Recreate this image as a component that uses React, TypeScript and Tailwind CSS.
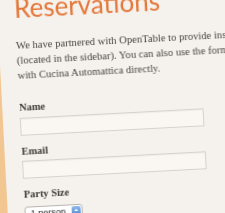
export default function App() {
  return (
    <div className="w-[225px] h-[213px] overflow-hidden bg-[#f1c690]">
      {/* page panel, photographed at a slight angle */}
      <div className="ml-[-5px] mt-[-30px] w-[340px] h-[320px] origin-top-left rotate-[-3deg] bg-[#f5f1ec] px-[17px] pt-[26px] blur-[0.3px]">
        <h1 className="font-['Lato',sans-serif] text-[26px] leading-[26px] text-[#e4783a] whitespace-nowrap">
          Reservations
        </h1>

        <p className="mt-[17px] font-['Liberation_Serif',serif] text-[10.6px] leading-[15px] text-[#4b4541] whitespace-nowrap">
          We have partnered with OpenTable to provide instant reservations online
          <br />
          (located in the sidebar). You can also use the form below to get in touch
          <br />
          with Cucina Automattica directly.
        </p>

        <form className="mt-[19px] flex flex-col font-['Liberation_Serif',serif] text-[#3f3935]">
          <label className="text-[10.4px] leading-[12px] font-bold">Name</label>
          <div className="mt-[4px] w-[184px] h-[18px] border border-[#d8d2ca] bg-[#faf7f3] shadow-[inset_0_1px_1px_rgba(0,0,0,0.04)]" />

          <label className="mt-[10px] text-[10.4px] leading-[12px] font-bold">Email</label>
          <div className="mt-[3px] w-[184px] h-[18px] border border-[#d8d2ca] bg-[#faf7f3] shadow-[inset_0_1px_1px_rgba(0,0,0,0.04)]" />

          <label className="mt-[10px] text-[10.4px] leading-[12px] font-bold">Party Size</label>
          <div className="mt-[6px] flex items-center w-[58px] h-[15px] rounded-[3px] border border-[#b9b5b0] bg-white pl-[5px] pr-[1px]">
            <span className="flex-1 font-['Liberation_Sans',sans-serif] text-[9px] leading-none text-[#222]">1 person</span>
            <span className="flex flex-col items-center justify-center w-[9px] h-[11px] rounded-[2px] bg-gradient-to-b from-[#8fb8ea] to-[#3f7fd6]">
              <svg width="5" height="8" viewBox="0 0 5 8">
                <path d="M2.5 0.5 L4.5 3 L0.5 3 Z" fill="#fff" />
                <path d="M2.5 7.5 L4.5 5 L0.5 5 Z" fill="#fff" />
              </svg>
            </span>
          </div>
        </form>
      </div>
    </div>
  );
}
